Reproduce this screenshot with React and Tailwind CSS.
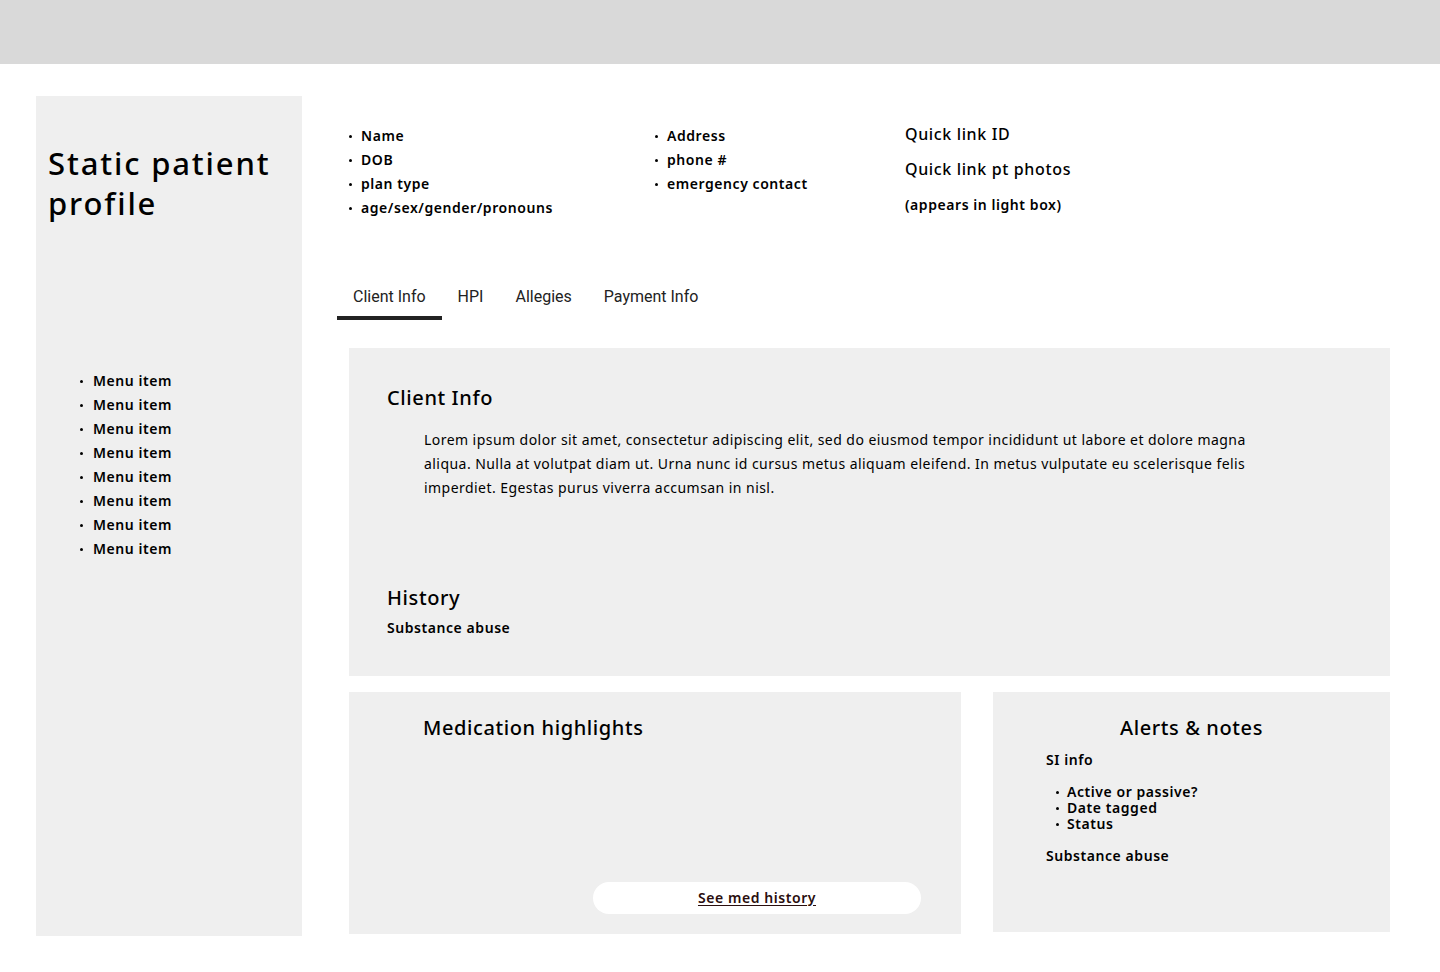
import React from "react";

const font = "font-['Noto_Sans',sans-serif]";

const Dot = () => <span className="w-[3px] h-[3px] rounded-full bg-black shrink-0" />;

const BulletList = ({ items, className = "", gap = "gap-[9px]" }) => (
  <ul className={className}>
    {items.map((item, i) => (
      <li key={i} className={`flex items-center ${gap}`}>
        <Dot />
        <span>{item}</span>
      </li>
    ))}
  </ul>
);

const tabs = ["Client Info", "HPI", "Allegies", "Payment Info"];

const App = () => {
  return (
    <div className={`min-h-[972px] bg-white text-black ${font}`}>
      <div className="h-16 bg-[#d9d9d9]" />

      <div className="flex mt-8">
        {/* sidebar */}
        <div className="ml-9 w-[266px] h-[840px] bg-[#efefef] pl-3 pt-[47px] shrink-0">
          <h1 className="text-[31px] leading-10 font-medium tracking-[0.06em]">
            Static patient
            <br />
            profile
          </h1>
          <BulletList
            className="mt-[146px] ml-8 text-sm leading-6 font-semibold tracking-[0.04em]"
            gap="gap-[10px]"
            items={Array(8).fill("Menu item")}
          />
        </div>

        {/* main */}
        <div className="flex-1 pl-[35px] pr-[50px]">
          <div className="flex pt-7 pl-3 text-sm leading-6 font-semibold tracking-[0.04em]">
            <BulletList
              className="w-[306px]"
              items={["Name", "DOB", "plan type", "age/sex/gender/pronouns"]}
            />
            <BulletList
              className="w-[250px]"
              items={["Address", "phone #", "emergency contact"]}
            />
            <div>
              <p className="text-base leading-5 font-medium tracking-[0.04em]">Quick link ID</p>
              <p className="mt-[15px] text-base leading-5 font-medium tracking-[0.04em]">
                Quick link pt photos
              </p>
              <p className="mt-[16px] text-sm leading-5">(appears in light box)</p>
            </div>
          </div>

          <div className="flex mt-[65px] font-['Roboto',sans-serif] text-base leading-6 text-[#222]">
            {tabs.map((t, i) => (
              <div
                key={t}
                className={`px-4 pb-[7px] border-b-4 ${i === 0 ? "border-[#222]" : "border-transparent"}`}
              >
                {t}
              </div>
            ))}
          </div>

          <div className="ml-3 mt-7 h-[328px] bg-[#efefef] pl-[38px] pt-9">
            <h2 className="text-xl leading-7 font-medium tracking-[0.03em]">Client Info</h2>
            <p className="mt-4 ml-[37px] w-[835px] text-sm leading-6 tracking-[0.032em]">
              Lorem ipsum dolor sit amet, consectetur adipiscing elit, sed do eiusmod tempor incididunt ut labore et dolore
              magna aliqua. Nulla at volutpat diam ut. Urna nunc id cursus metus aliquam eleifend. In metus vulputate eu
              scelerisque felis imperdiet. Egestas purus viverra accumsan in nisl.
            </p>
            <h2 className="mt-[84px] text-xl leading-7 font-medium tracking-[0.03em]">History</h2>
            <p className="mt-[6px] text-sm leading-5 font-semibold tracking-[0.04em]">Substance abuse</p>
          </div>

          <div className="ml-3 mt-4 flex items-start gap-8">
            <div className="w-[612px] h-[242px] bg-[#efefef] pt-[22px] pl-[74px] pr-10 flex flex-col">
              <h2 className="text-xl leading-7 font-medium tracking-[0.03em]">Medication highlights</h2>
              <div className="mt-auto mb-5 ml-[170px] h-8 rounded-full bg-white flex items-center justify-center">
                <a href="#" className="text-sm font-semibold tracking-[0.04em] underline underline-offset-2 text-[#2a0e0e]">
                  See med history
                </a>
              </div>
            </div>

            <div className="flex-1 h-[240px] bg-[#efefef] pt-[22px]">
              <h2 className="text-center text-xl leading-7 font-medium tracking-[0.03em]">Alerts &amp; notes</h2>
              <div className="pl-[53px] text-sm font-semibold tracking-[0.04em]">
                <p className="mt-2 leading-5">SI info</p>
                <BulletList
                  className="mt-[14px] ml-[10px] leading-4"
                  gap="gap-[8px]"
                  items={["Active or passive?", "Date tagged", "Status"]}
                />
                <p className="mt-[14px] leading-5">Substance abuse</p>
              </div>
            </div>
          </div>
        </div>
      </div>
    </div>
  );
};

export default App;
